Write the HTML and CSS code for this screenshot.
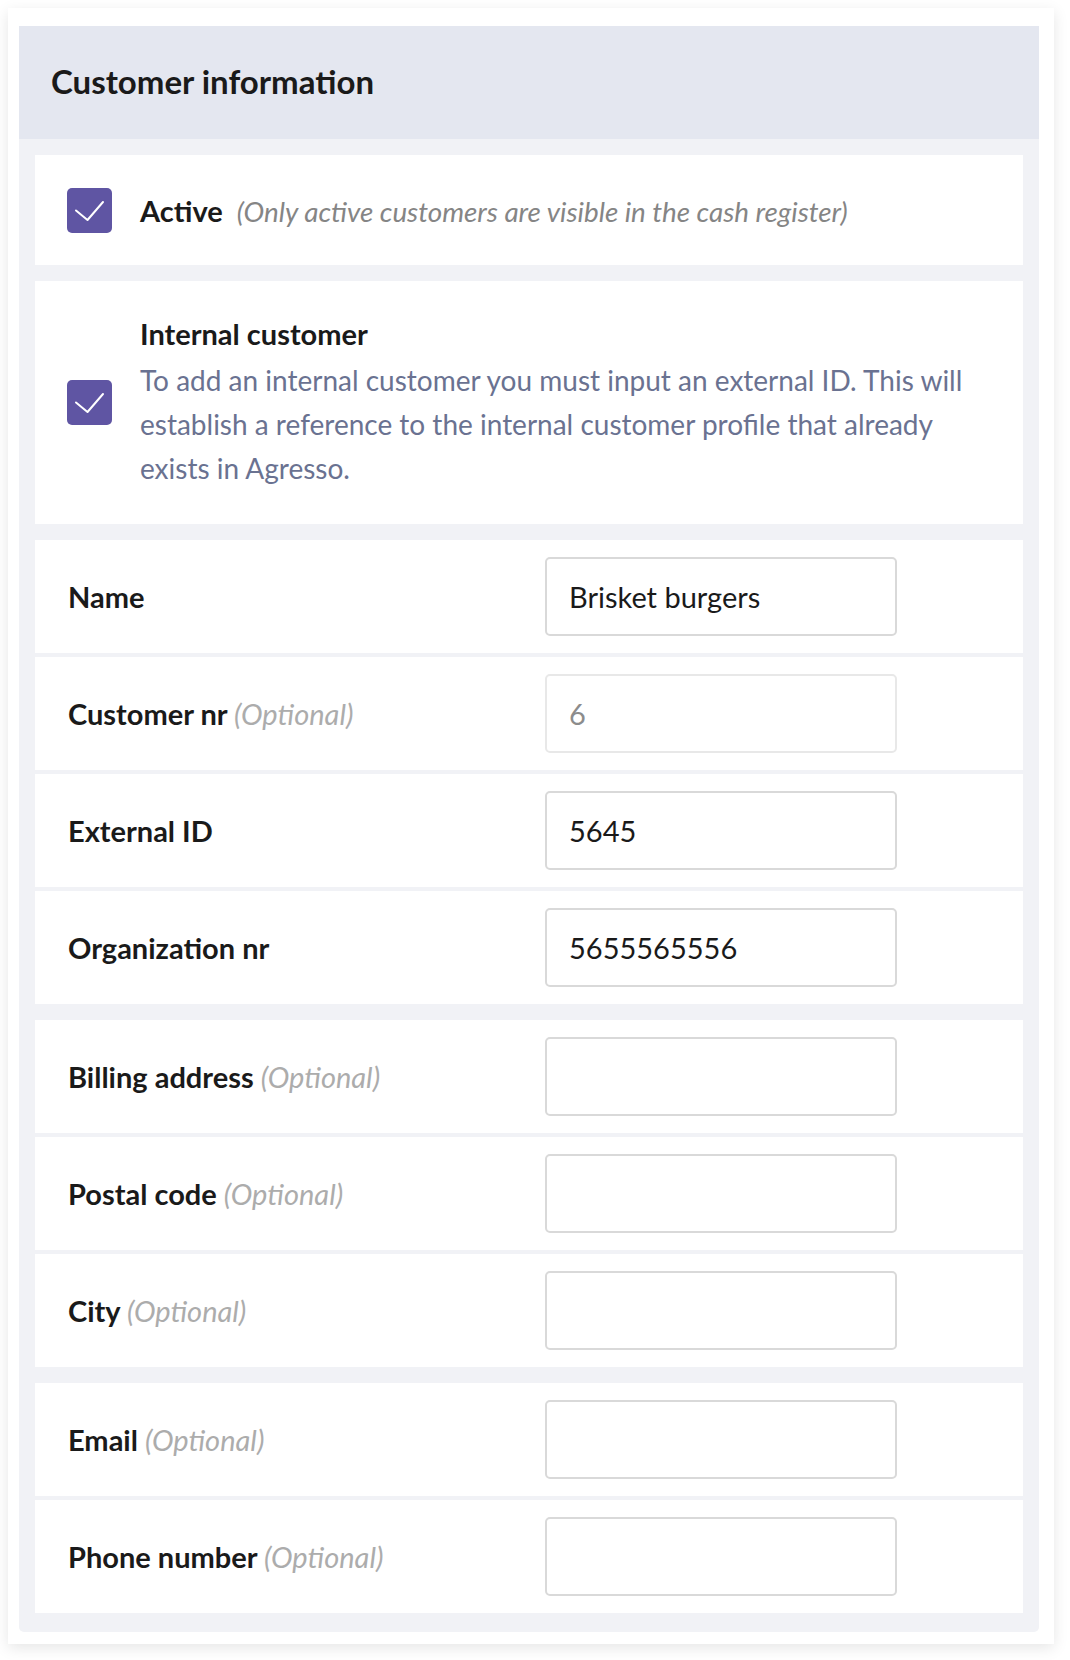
FILE: index.html
```html
<!DOCTYPE html>
<html lang="en">
<head>
<meta charset="utf-8">
<title>Customer information</title>
<link rel="stylesheet" href="styles.css">
</head>
<body>
<div class="card">
  <div class="panel">
    <div class="panel-header">
      <h1 class="title">Customer information</h1>
    </div>
    <div class="panel-body">
      <div class="group">
        <div class="check-row check-row--active">
          <span class="checkbox"><svg viewBox="0 0 45 45" width="45" height="45"><path d="M9 22.5 L20.5 32 L36 14" fill="none" stroke="#fff" stroke-width="2" stroke-linecap="round" stroke-linejoin="round"/></svg></span>
          <div class="check-text">
            <span class="check-label">Active</span>
            <span class="check-note">(Only active customers are visible in the cash register)</span>
          </div>
        </div>
      </div>
      <div class="group">
        <div class="check-row check-row--internal">
          <span class="checkbox"><svg viewBox="0 0 45 45" width="45" height="45"><path d="M9 22.5 L20.5 32 L36 14" fill="none" stroke="#fff" stroke-width="2" stroke-linecap="round" stroke-linejoin="round"/></svg></span>
          <div class="check-text">
            <div class="check-label">Internal customer</div>
            <div class="check-desc">To add an internal customer you must input an external ID. This will establish a reference to the internal customer profile that already exists in Agresso.</div>
          </div>
        </div>
      </div>
      <div class="group">
        <div class="field">
          <div class="field-label">Name</div>
          <div class="input">Brisket burgers</div>
        </div>
        <div class="field">
          <div class="field-label">Customer nr <span class="optional">(Optional)</span></div>
          <div class="input input--disabled">6</div>
        </div>
        <div class="field">
          <div class="field-label">External ID</div>
          <div class="input">5645</div>
        </div>
        <div class="field">
          <div class="field-label">Organization nr</div>
          <div class="input">5655565556</div>
        </div>
      </div>
      <div class="group">
        <div class="field">
          <div class="field-label">Billing address <span class="optional">(Optional)</span></div>
          <div class="input"></div>
        </div>
        <div class="field">
          <div class="field-label">Postal code <span class="optional">(Optional)</span></div>
          <div class="input"></div>
        </div>
        <div class="field">
          <div class="field-label">City <span class="optional">(Optional)</span></div>
          <div class="input"></div>
        </div>
      </div>
      <div class="group">
        <div class="field">
          <div class="field-label">Email <span class="optional">(Optional)</span></div>
          <div class="input"></div>
        </div>
        <div class="field">
          <div class="field-label">Phone number <span class="optional">(Optional)</span></div>
          <div class="input"></div>
        </div>
      </div>
    </div>
  </div>
</div>
</body>
</html>
```
FILE: styles.css
```css
* { box-sizing: border-box; }
html, body { margin: 0; padding: 0; background: #fff; }
body {
  font-family: Lato, "Open Sans", "Liberation Sans", sans-serif;
  color: #1a1a1a;
  padding: 8px 16px 16px 8px;
}
.card {
  width: 1046px;
  background: #fff;
  padding: 18px 15px 12px 11px;
  box-shadow: 0 4px 14px rgba(0, 0, 0, 0.10);
}
.panel {
  background: #f1f2f6;
  border-radius: 0 0 5px 5px;
}
.panel-header {
  background: #e4e7f0;
  height: 113px;
  display: flex;
  align-items: center;
  padding-left: 32px;
  padding-bottom: 3px;
}
.title {
  margin: 0;
  font-size: 33px;
  font-weight: 700;
  color: #1a1a1a;
}
.panel-body {
  padding: 16px 16px 19px 16px;
  display: flex;
  flex-direction: column;
  gap: 16px;
}
.group {
  display: flex;
  flex-direction: column;
  gap: 4px;
}
.check-row {
  background: #fff;
  display: flex;
  align-items: center;
  padding-left: 32px;
  padding-right: 33px;
}
.check-row--active { height: 110px; }
.check-row--internal { height: 243px; }
.check-row--internal .check-text { padding-bottom: 6px; }
.checkbox {
  flex: none;
  width: 45px;
  height: 45px;
  border-radius: 5px;
  background: #5f55a3;
  display: flex;
  margin-right: 28px;
}
.check-label {
  font-size: 29px;
  font-weight: 700;
  color: #1a1a1a;
}
.check-note {
  font-size: 27.8px;
  font-style: italic;
  color: #858585;
  margin-left: 10px;
}
.check-desc {
  font-size: 28px;
  line-height: 44px;
  color: #6a7291;
}
.check-row--internal .check-label { line-height: 49px; }
.field {
  background: #fff;
  height: 113px;
  display: grid;
  grid-template-columns: 477px 352px;
  align-items: center;
  padding-left: 33px;
}
.field-label {
  font-size: 29px;
  font-weight: 700;
  color: #1a1a1a;
}
.optional {
  font-weight: 400;
  font-style: italic;
  color: #acacac;
}
.input {
  height: 79px;
  border: 2px solid #d9d9d9;
  border-radius: 5px;
  background: #fff;
  padding-left: 22px;
  display: flex;
  align-items: center;
  font-size: 29px;
  color: #1a1a1a;
}
.input--disabled {
  border-color: #e8e8e8;
  color: #8c8c8c;
}
```
